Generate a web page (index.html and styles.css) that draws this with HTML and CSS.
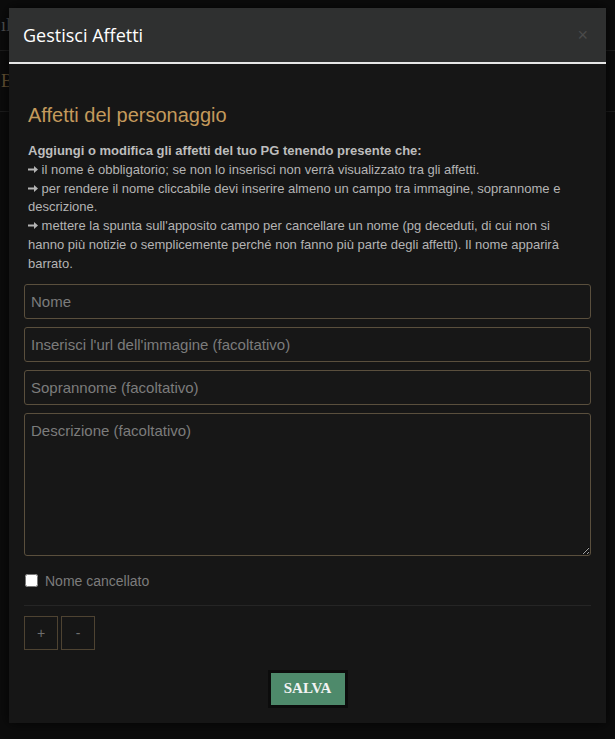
FILE: index.html
```html
<!DOCTYPE html>
<html lang="it">
<head>
    <meta charset="UTF-8">
    <meta name="viewport" content="width=device-width, initial-scale=1.0">
    <title>Gestisci Affetti</title>
    <link rel="stylesheet" href="styles.css">
</head>
<body>

<!-- Page behind the modal -->
<div class="backdrop">
    <div class="bg-row bg-top"><span>ıl</span></div>
    <div class="bg-row bg-gold"><span>Bo</span></div>
</div>

<!-- Modal -->
<div class="modal">
    <div class="modal-header">
        <h3>Gestisci Affetti</h3>
        <span class="close">&times;</span>
    </div>

    <div class="modal-body">
        <h2>Affetti del personaggio</h2>
        <p class="info">
            <strong>Aggiungi o modifica gli affetti del tuo PG tenendo presente che:</strong><br>
            <svg class="arrow" viewBox="0 0 10 7"><path d="M0 2.5H6V0L10 3.5L6 7V4.5H0Z"/></svg> il nome è obbligatorio; se non lo inserisci non verrà visualizzato tra gli affetti.<br>
            <svg class="arrow" viewBox="0 0 10 7"><path d="M0 2.5H6V0L10 3.5L6 7V4.5H0Z"/></svg> per rendere il nome cliccabile devi inserire almeno un campo tra immagine, soprannome e descrizione.<br>
            <svg class="arrow" viewBox="0 0 10 7"><path d="M0 2.5H6V0L10 3.5L6 7V4.5H0Z"/></svg> mettere la spunta sull'apposito campo per cancellare un nome (pg deceduti, di cui non si hanno più notizie o semplicemente perché non fanno più parte degli affetti). Il nome apparirà barrato.
        </p>

        <form class="affetto">
            <input type="text" placeholder="Nome">
            <input type="text" placeholder="Inserisci l'url dell'immagine (facoltativo)">
            <input type="text" placeholder="Soprannome (facoltativo)">
            <textarea placeholder="Descrizione (facoltativo)"></textarea>
            <label class="check"><input type="checkbox"> Nome cancellato</label>
        </form>

        <hr>

        <div class="row-buttons">
            <button type="button">+</button>
            <button type="button">-</button>
        </div>

        <div class="save">
            <button type="button" class="btn-save">SALVA</button>
        </div>
    </div>
</div>

</body>
</html>
```

FILE: styles.css
```css
body {
    margin: 0;
    padding: 0;
    background-color: #0c0c0c;
    font-family: "Liberation Sans", Arial, sans-serif;
    height: 739px;
    overflow: hidden;
    position: relative;
}
.backdrop {
    position: absolute;
    top: 0;
    left: 0;
    right: 0;
    bottom: 0;
}
.bg-row {
    height: 50px;
    border-bottom: 1px solid #1e1e1e;
    font-family: "Liberation Serif", serif;
    font-size: 18px;
    line-height: 50px;
    color: #555;
    padding-left: 1px;
}
.bg-gold {
    color: #6a5636;
    height: 60px;
    line-height: 60px;
}
.modal {
    position: absolute;
    top: 8px;
    left: 9px;
    width: 597px;
    background-color: #161616;
    box-shadow: 0 0 12px rgba(0,0,0,0.8);
}
.modal-header {
    background-color: #2f3030;
    height: 54px;
    border-bottom: 2px solid #e6e6e6;
    display: flex;
    align-items: center;
    justify-content: space-between;
    padding: 0 14px;
}
.modal-header h3 {
    margin: 0;
    color: #fff;
    font-family: "Open Sans", sans-serif;
    font-weight: 400;
    font-size: 18px;
}
.close {
    color: #4a4a4a;
    font-size: 18px;
    margin-right: 4px;
}
.modal-body {
    padding: 40px 15px 15px 15px;
}
.modal-body h2 {
    margin: 0 0 15px 4px;
    color: #c49a5c;
    font-weight: 400;
    font-size: 20px;
}
.info {
    margin: 0 26px 10px 4px;
    color: #b4b4b4;
    font-size: 13px;
    line-height: 18.8px;
}
.info strong {
    color: #bdbdbd;
}
.arrow {
    width: 10px;
    height: 7px;
    fill: #b4b4b4;
    vertical-align: 1px;
}
.affetto {
    display: flex;
    flex-direction: column;
    gap: 8px;
}
.affetto input[type="text"], .affetto textarea {
    box-sizing: border-box;
    background-color: #171717;
    border: 1px solid #5a4f3d;
    border-radius: 3px;
    color: #ccc;
    font-family: "Liberation Sans", Arial, sans-serif;
    font-size: 15px;
    padding: 0 6px;
    height: 35px;
}
.affetto textarea {
    height: 143px;
    padding-top: 8px;
    resize: vertical;
}
.affetto ::placeholder {
    color: #7c7c7c;
}
.check {
    margin-top: 9px;
    color: #7c7c7c;
    font-size: 14px;
    display: flex;
    align-items: center;
}
.check input {
    margin: 0 7px 0 1px;
    width: 13px;
    height: 13px;
}
hr {
    border: 0;
    border-top: 1px solid #252525;
    margin: 16px 0 10px 0;
}
.row-buttons {
    display: flex;
    gap: 3px;
}
.row-buttons button {
    box-sizing: border-box;
    width: 34px;
    height: 34px;
    background-color: #161616;
    border: 1px solid #4e4332;
    color: #6e6e6e;
    font-size: 14px;
}
.save {
    text-align: center;
    margin-top: 20px;
}
.btn-save {
    box-sizing: border-box;
    background-color: #4e8a6b;
    border: 3px solid #0c0c0c;
    color: #f2f2f2;
    font-family: "Liberation Serif", serif;
    font-weight: bold;
    font-size: 15px;
    padding: 0;
    width: 80px;
    height: 38px;
}
```
